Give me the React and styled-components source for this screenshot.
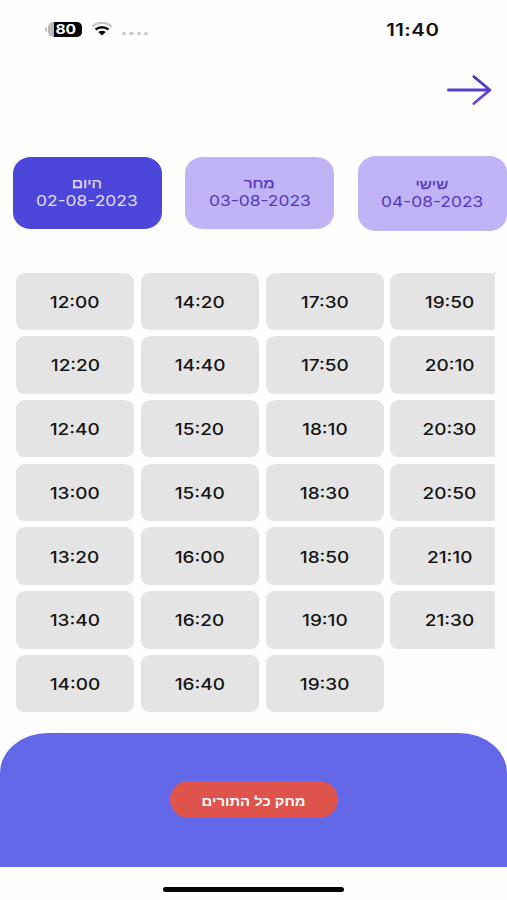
import React from 'react';
import styled, { createGlobalStyle } from 'styled-components';

const days = [
  { id: 1, title: 'היום', date: '02-08-2023', active: true },
  { id: 2, title: 'מחר', date: '03-08-2023' },
  { id: 3, title: 'שישי', date: '04-08-2023', focused: true },
];

const slots = [
  '12:00', '12:20', '12:40', '13:00', '13:20', '13:40', '14:00',
  '14:20', '14:40', '15:20', '15:40', '16:00', '16:20', '16:40',
  '17:30', '17:50', '18:10', '18:30', '18:50', '19:10', '19:30',
  '19:50', '20:10', '20:30', '20:50', '21:10', '21:30',
];

const App = () => {
  const renderDays = () => {
    return days.map((d) => {
      return (
        <Day key={d.id} $active={d.active} $focused={d.focused}>
          <DayTitle>{d.title}</DayTitle>
          <DayDate>{d.date}</DayDate>
        </Day>
      );
    });
  };

  const renderSlots = () => {
    return slots.map((s) => {
      return (
        <Slot key={s}>
          <SlotTime>{s}</SlotTime>
        </Slot>
      );
    });
  };

  return (
    <Screen>
      <GlobalStyle />
      <StatusBar>
        <StatusIcons>
          <BatteryTip />
          <Battery>
            <BatteryText>80</BatteryText>
          </Battery>
          <Wifi width='22' height='14' viewBox='0 0 22 14'>
            <path d='M1.2 4.6C6.8-.3 15.2-.3 20.8 4.6' stroke='#c4c4c4' strokeWidth='2.3' />
            <path d='M4.6 7.6C8.3 4.5 13.7 4.5 17.4 7.6' stroke='#0a0a0a' strokeWidth='2.6' />
            <path d='M7.2 10.1C9.4 8.4 12.6 8.4 14.8 10.1L11 13.5Z' fill='#0a0a0a' />
          </Wifi>
          <Signal>
            <Dot />
            <Dot />
            <Dot />
            <Dot />
          </Signal>
        </StatusIcons>
        <Clock>11:40</Clock>
      </StatusBar>

      <Header>
        <BackButton aria-label='חזרה'>
          <svg width='46' height='32' viewBox='0 0 46 32' fill='none'>
            <defs>
              <linearGradient id='arrow' gradientUnits='userSpaceOnUse' x1='0' y1='2' x2='0' y2='30'>
                <stop offset='0' stopColor='#403dbd' />
                <stop offset='1' stopColor='#7444d4' />
              </linearGradient>
            </defs>
            <path
              d='M2.4 16H44M27.8 2.7L44 16L27.8 29.5'
              stroke='url(#arrow)'
              strokeWidth='2.8'
              strokeLinecap='round'
              strokeLinejoin='round'
            />
          </svg>
        </BackButton>
      </Header>

      <Days>{renderDays()}</Days>
      <Slots>{renderSlots()}</Slots>

      <Footer>
        <DeleteButton>
          <DeleteText>מחק כל התורים</DeleteText>
        </DeleteButton>
      </Footer>
      <HomeArea>
        <HomeIndicator />
      </HomeArea>
    </Screen>
  );
};

export default App;

const GlobalStyle = createGlobalStyle`
  * {
    box-sizing: border-box;
  }

  body {
    margin: 0;
    background-color: #fefefe;
  }

  button {
    border: none;
    padding: 0;
    background: none;
    font: inherit;
  }
`;

const Screen = styled.div`
  display: flex;
  flex-direction: column;
  width: 507px;
  height: 900px;
  overflow: hidden;
  font-family: Inter, 'Liberation Sans', sans-serif;
`;

const StatusBar = styled.div`
  display: flex;
  justify-content: space-between;
  align-items: center;
  height: 58px;
  padding: 0 68px 0 45px;
`;

const StatusIcons = styled.div`
  display: flex;
  align-items: center;
`;

const BatteryTip = styled.div`
  width: 2px;
  height: 5px;
  margin-right: 1px;
  border-radius: 2px 0 0 2px;
  background-color: #bdbdbd;
`;

const Battery = styled.div`
  display: flex;
  justify-content: center;
  align-items: center;
  width: 34px;
  height: 15px;
  border-radius: 5px;
  background: linear-gradient(to right, #bababa 6px, #050505 6.5px);
`;

const BatteryText = styled.span`
  padding-left: 1px;
  color: white;
  font-size: 13px;
  font-weight: 700;
  line-height: 15px;
  transform: scaleX(1.2);
`;

const Wifi = styled.svg`
  margin-left: 9px;
  fill: none;
`;

const Signal = styled.div`
  display: flex;
  gap: 3px;
  margin: 9px 0 0 9px;
`;

const Dot = styled.div`
  width: 4.3px;
  height: 3.6px;
  border-radius: 50%;
  background-color: #c9c9c9;
`;

const Clock = styled.span`
  margin-top: 1px;
  color: #111;
  font-size: 17px;
  font-weight: 600;
  letter-spacing: 0.4px;
  transform: scaleX(1.2);
  transform-origin: right;
`;

const Header = styled.div`
  display: flex;
  justify-content: flex-end;
  height: 97px;
  padding: 16px 15px 0 0;
`;

const BackButton = styled.button`
  height: 32px;
`;

const Days = styled.div`
  display: flex;
  align-items: center;
  justify-content: space-between;
  height: 76px;
  padding-left: 12.5px;
`;

const Day = styled.div`
  display: flex;
  flex-direction: column;
  align-items: center;
  justify-content: center;
  width: ${(props) => (props.$focused ? '149.5px' : '149px')};
  height: ${(props) => (props.$focused ? '75px' : '72px')};
  padding-bottom: ${(props) => (props.$focused ? '0' : '2px')};
  border-radius: 18px / 16px;
  color: ${(props) => (props.$active ? '#e2dcfb' : '#5537bd')};
  background-color: ${(props) => (props.$active ? '#4c46da' : '#c0b4f7')};
`;

const DayTitle = styled.span`
  font-family: 'Liberation Sans', sans-serif;
  font-size: 14px;
  line-height: 18px;
  -webkit-text-stroke: 0.25px currentColor;
  transform: scaleX(1.18);
`;

const DayDate = styled.span`
  font-size: 15px;
  line-height: 18px;
  transform: scaleX(1.16);
`;

const Slots = styled.div`
  display: grid;
  grid-template-rows: repeat(7, 57.6px);
  grid-auto-columns: 118px;
  grid-auto-flow: column;
  gap: 6.1px 6.8px;
  width: 495px;
  margin-top: 41.5px;
  padding-left: 16px;
  overflow: hidden;
`;

const Slot = styled.div`
  display: flex;
  align-items: center;
  justify-content: center;
  border-radius: 9px 9px 8px 8px;
  background-color: #e4e4e4;
`;

const SlotTime = styled.span`
  padding-top: 1px;
  color: #151515;
  font-size: 16.5px;
  font-weight: 450;
  transform: scaleX(1.15);
`;

const Footer = styled.div`
  display: flex;
  justify-content: center;
  align-items: center;
  height: 134.5px;
  margin-top: auto;
  border-radius: 48px 48px 0 0 / 40px 40px 0 0;
  background-color: #6368e8;
`;

const DeleteButton = styled.button`
  width: 168px;
  height: 37px;
  border-radius: 19px;
  color: white;
  background-color: #de544c;
`;

const DeleteText = styled.span`
  display: inline-block;
  padding-bottom: 1px;
  font-family: 'Liberation Sans', sans-serif;
  font-size: 13px;
  font-weight: 700;
  transform: scaleX(1.14);
`;

const HomeArea = styled.div`
  display: flex;
  justify-content: center;
  height: 33px;
  padding-top: 20px;
`;

const HomeIndicator = styled.div`
  width: 181px;
  height: 5px;
  border-radius: 3px;
  background-color: #050505;
`;
